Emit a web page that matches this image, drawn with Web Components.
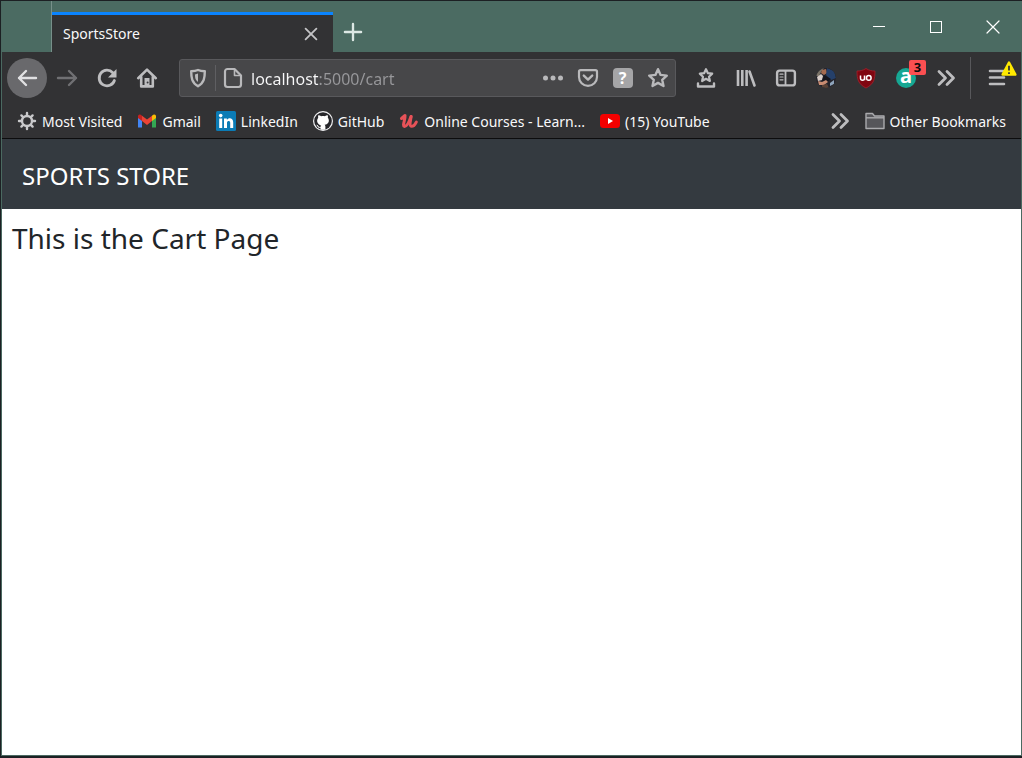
<!DOCTYPE html>
<html lang="en">
<head>
<meta charset="utf-8">
<meta name="viewport" content="width=device-width, initial-scale=1">
<title>SportsStore</title>
<style>
  html, body { margin: 0; height: 100%; }
  body { background: #1c2023; font-family: "Noto Sans", "Open Sans", sans-serif; }
</style>
</head>
<body>
<browser-window>
  <title-bar slot="chrome">SportsStore</title-bar>
  <nav-toolbar slot="chrome"></nav-toolbar>
  <bookmarks-bar slot="chrome"></bookmarks-bar>
  <store-page></store-page>
</browser-window>

<script>
const reset = `
  *, *::before { box-sizing: border-box; }
  button { display: flex; align-items: center; justify-content: center; margin: 0; padding: 0;
    border: 0; background: none; color: inherit; font: inherit; }
  svg { display: block; flex: none; overflow: visible; }
  a { color: inherit; text-decoration: none; }
`;

const line = (d, w = 2, extra = '') =>
  `<path d="${d}" fill="none" stroke="currentColor" stroke-width="${w}" stroke-linecap="round" stroke-linejoin="round" ${extra}/>`;

const icons = {
  back: line('M19 10H2M9 3L2 10l7 7', 2.4),
  forward: line('M1 10h18M12 3l7 7-7 7', 2.4),
  reload: line('M17.400 12.500A7.800 7.800 0 1 1 15.800 4.800', 2.8) + '<path d="M19.500 1v8.500H11z" fill="currentColor"/>',
  home: line('M1.2 10.2L10 1.6l8.8 8.6', 2.6) + line('M4.200 9v9.400h11.600V9', 2.6) +
    '<path d="M7.5 10h5v8h-5z" fill="currentColor"/><circle cx="10.6" cy="14.6" r="1" fill="#38383b"/>',
  shield: line('M10 2c2.200.9 4.500 1.200 6.800 1.300 0 6.500-.6 11.400-6.800 14.900C3.800 14.700 3.200 9.800 3.200 3.300 5.500 3.200 7.800 2.900 10 2z', 2.400) +
    '<path d="M10 5.500v8.500c-2.500-2-3-4-3-7.600z" fill="currentColor"/>',
  page: line('M4.500 1h7L18 7.500v9a2.500 2.500 0 0 1-2.500 2.500h-11A2.500 2.500 0 0 1 2 16.500v-13A2.500 2.500 0 0 1 4.500 1z', 2.200) +
    line('M11.500 1.500V7.500H17.500', 1.6),
  dots: '<g fill="currentColor"><circle cx="2.500" cy="10" r="2.500"/><circle cx="10" cy="10" r="2.500"/><circle cx="17.500" cy="10" r="2.500"/></g>',
  pocket: line('M2.500 2.200h15a1.500 1.500 0 0 1 1.500 1.500V9a9 8.800 0 0 1-18 0V3.700A1.500 1.500 0 0 1 2.500 2.200z', 2.2) + line('M5.800 7.600l4.200 4 4.200-4', 2.4),
  star: line('M10 1.200l2.600 5.700 6.200.7-4.600 4.200 1.300 6.200L10 14.900 4.500 18l1.300-6.200L1.200 7.600l6.200-.7z', 2.400),
  starTray: line('M10 1.200l1.900 4 4.300.500-3.200 3 .9 4.300-3.900-2.200L6.100 13 7 8.700l-3.200-3 4.300-.5z', 2.200) +
    line('M2 15.500v3h16v-3', 2.4),
  library: line('M2 2v16M6.300 2v16M10.600 2v16', 2.6, 'style="stroke-linecap:butt"') + line('M13.500 3.500L18.500 17.500', 2.6),
  sidebar: '<rect x="1.100" y="2.600" width="17.800" height="14.800" rx="2.500" fill="none" stroke="currentColor" stroke-width="2.400"/>' +
    line('M9.500 3v14', 1.8) + line('M4 6.200h3M4 9h3M4 11.800h3', 1.200),
  more: line('M3 3.500l6.500 6.500L3 16.500M11 3.500l6.500 6.500L11 16.500', 2.8),
  menu: line('M2 3h14M2 9.500h14M2 16h14', 2.6),
  photo: '<clipPath id="p"><circle cx="10" cy="10" r="10"/></clipPath><g clip-path="url(#p)"><path fill="#24242c" d="M0 0h20v20H0z"/>' +
    '<path fill="#7b7468" d="M0 0h8L5 4 3 8H0z"/><path fill="#d8cdc8" d="M1 9l4-3 2 2-1 4-4 1z"/><path fill="#a56b50" d="M6 2l4-1 1 4-3 2-3-2z"/>' +
    '<path fill="#25406a" d="M11 0l7 3 2 7-5 2-5-5z"/><path fill="#16161e" d="M8 7l7 4-5 4-4-2z"/>' +
    '<path fill="#c98c72" d="M2 13l4 1 4-2 2 2-4 3-5 0z"/><path fill="#8fa4bb" d="M14 15l4-3v4l-4 2z"/><path fill="#5a4236" d="M6 17l5-1 2 4H6z"/></g>',
  amazon: '<circle cx="10" cy="10" r="10" fill="#16a793"/>',
  ublock: '<path d="M10 .5c3 2 6 2.500 9 2.500 0 8-1 13-9 17C2 16 1 11 1 3c3 0 6-.5 9-2.500z" fill="#800610" stroke="#a3212c" stroke-width=".8"/>' +
    '<path d="M4.500 7.500v2.800q0 2 2 2t2-2V7.500M8.600 7.500v4.800" fill="none" stroke="#fff" stroke-width="1.500"/><circle cx="12.800" cy="9.900" r="2.300" fill="none" stroke="#fff" stroke-width="1.500"/>',
  warning: '<path d="M10 2l8 15H2z" fill="#ffe900" stroke="#ffe900" stroke-width="3" stroke-linejoin="round"/><path d="M10 6v6M10 14v2.400" stroke="#333" stroke-width="2.200"/>',
  gear: '<circle cx="10" cy="10" r="5" fill="none" stroke="currentColor" stroke-width="2.400"/>' +
    line('M10 2v2.500M10 15.500V18M2 10h2.500M15.500 10H18M4.400 4.400l1.700 1.700M13.900 13.900l1.700 1.700M15.600 4.400l-1.700 1.700M6.100 13.900l-1.700 1.700', 2.400),
  gmail: '<path fill="#4285f4" d="M1 5v11.500h4V8.300z"/><path fill="#34a853" d="M15 8.300v8.200h4V5z"/><path fill="#fbbc04" d="M15 4.800V10l4-3V4.800q-1.500-2.600-4 0z"/>' +
    '<path fill="#ea4335" d="M5 4.800L10 8.600l5-3.800V10l-5 3.900L5 10z"/><path fill="#c5221f" d="M1 4.800q1.500-2.600 4 0V10L1 7z"/>',
  linkedin: '<rect width="20" height="20" rx="1.500" fill="#0b7bb5"/><g fill="#fff"><circle cx="4.700" cy="4.600" r="1.800"/><path d="M3.200 7.600h3V17h-3zM8 7.600h2.900v1.300c1.500-2.500 6.300-2.200 6.300 2.300V17h-3v-5.200c0-2.400-3.200-2.300-3.200 0V17H8z"/></g>',
  github: '<circle cx="10" cy="10" r="10" fill="#f2f2f4"/><circle cx="10" cy="10" r="8.800" fill="#26262a"/>' +
    '<path fill="#fff" d="M5.300 4.200c1-.2 2 .4 2.800 1 1.200-.3 2.600-.3 3.800 0 .8-.6 1.800-1.200 2.800-1 .4 1 .3 1.900.1 2.500 2.300 2.900.8 6.600-3.200 7 .7.600.8 1.300.8 2.100v2.600c-1.600.5-3.400.5-4.900 0v-1.700c-2.100.4-2.700-.6-3.100-1.500-.3-.6-.6-.9-1.100-1.200.6-.4 1.500.1 2 .9.600.9 1.200 1.200 2.300.9.100-.5.300-.9.600-1.100C4.300 13.100 3 9.700 5.200 6.700c-.2-.8-.2-1.600.1-2.500z"/>',
  udemy: '<g fill="none" stroke="#e65258" stroke-linecap="round" stroke-linejoin="round"><path d="M2.500 7.500L6 4.500C6.500 8.500 2.800 15 5.500 15.400c3 .2 5-5.500 6.500-9.900" stroke-width="3"/><path d="M12.200 5.500C11.800 9.500 9.800 15.300 12.600 15.400c2 0 3.800-2.400 4.800-4.400" stroke-width="2.800"/></g>',
  youtube: '<rect y="3" width="20" height="14" rx="3.500" fill="#f40000"/><path d="M8 7l5 3-5 3z" fill="#fff"/>',
  folder: '<path d="M1 17.500V2.500h6.500l2 2.500H19v12.500z" fill="#56565a" stroke="#aaaaad" stroke-width="1.400" stroke-linejoin="round"/><path d="M1 6.800h18" stroke="#aaaaad" stroke-width="1.400"/>',
  plus: line('M10 1v18M1 10h18', 2.6),
  cross: line('M4 4l12 12M16 4L4 16', 2),
  winMin: '<path d="M4 9.500h12" stroke="currentColor"/>',
  winMax: '<rect x="4.500" y="4.500" width="11" height="11" fill="none" stroke="currentColor"/>',
  winClose: line('M4 4l12 12M16 4L4 16', 1.2)
};
const icon = (name, size = 20) =>
  `<svg width="${size}" height="${size}" viewBox="0 0 20 20" aria-hidden="true">${icons[name]}</svg>`;

function define(name, css, html) {
  const template = document.createElement('template');
  template.innerHTML = `<style>${reset}${css}</style>${html}`;
  customElements.define(name, class extends HTMLElement {
    constructor() {
      super();
      this.attachShadow({ mode: 'open' }).append(template.content.cloneNode(true));
    }
  });
}

define('browser-window', `
  :host { display: flex; flex-direction: column; box-sizing: border-box; min-height: 100vh;
    border: solid #1c2023; border-width: 1px 0 2px 1px; }
  .frame { flex: 1; display: flex; flex-direction: column; background: #fff;
    border: solid #4b6961; border-width: 0 1px 1px; }
  header { border-bottom: 1px solid #0c0c0d; background: #323234; }
  main { flex: 1; }
`, `<div class="frame"><header><slot name="chrome"></slot></header><main><slot></slot></main></div>`);

define('title-bar', `
  :host { display: flex; height: 51px; background: #4b6b62; color: #f9f9fa; font-size: 14px; }
  .lead { width: 50px; border-right: 1px solid #77908a; }
  .tab { display: flex; align-items: center; justify-content: space-between; width: 281px;
    margin-top: 11px; padding: 0 13px 0 11px; border-top: 3px solid #0a84ff; background: #323234; }
  .tab button { color: #c4c4c6; }
  .new { width: 40px; padding-top: 11px; color: #dce8e4; }
  .controls { display: flex; margin-left: auto; }
  .controls button { width: 57px; color: #fff; }
`, `
  <div class="lead"></div>
  <div class="tab"><span><slot></slot></span><button aria-label="Close tab">${icon('cross', 18)}</button></div>
  <button class="new" aria-label="New tab">${icon('plus', 18)}</button>
  <div class="controls">
    <button aria-label="Minimize">${icon('winMin')}</button>
    <button aria-label="Maximize">${icon('winMax')}</button>
    <button aria-label="Close">${icon('winClose')}</button>
  </div>`);

define('address-bar', `
  :host { display: flex; align-items: center; box-sizing: border-box; height: 38px; min-width: 0;
    border: 1px solid #59595c; border-radius: 3px; background: #474749; color: #b9b9bb; }
  button { width: 35px; height: 36px; }
  .page { border-left: 1px solid #5f5f62; height: 26px; }
  input { flex: 1; min-width: 0; height: 36px; margin: 0; padding: 2px 0 0 1px; border: 0; outline: 0;
    font: 16px "Noto Sans", "Open Sans", sans-serif; color: #f9f9fa;
    background: linear-gradient(90deg, #f9f9fa 69px, #98989b 69px);
    -webkit-background-clip: text; background-clip: text; -webkit-text-fill-color: transparent; }
  .help { width: 20px; height: 20px; border-radius: 4px; background: #a5a5a7; color: #fff;
    font: bold 16px/20px "Noto Sans", sans-serif; text-align: center; }
`, `
  <button aria-label="Tracking protection">${icon('shield')}</button>
  <button class="page" aria-label="Site information">${icon('page')}</button>
  <input type="text" aria-label="Address" value="localhost:5000/cart" spellcheck="false">
  <button aria-label="Page actions">${icon('dots')}</button>
  <button aria-label="Save to Pocket">${icon('pocket')}</button>
  <button aria-label="Help"><span class="help">?</span></button>
  <button aria-label="Bookmark this page">${icon('star')}</button>`);

define('nav-toolbar', `
  :host { display: flex; align-items: center; height: 52px; padding: 0 3px 0 5px; color: #bdbdbf; }
  button { position: relative; flex: none; width: 40px; height: 40px; }
  .back { border-radius: 50%; background: #69696c; color: #e0e0e2; }
  .forward { color: #707073; }
  address-bar { flex: 1; margin: 0 10px 0 12px; }
  .rule { width: 1px; height: 42px; margin: 0 7px 0 4px; background: #58585b; }
  .a { position: absolute; inset: 0; color: #fff; font: bold 20px/36px "Noto Sans", sans-serif; text-align: center; }
  .badge { position: absolute; top: 2px; left: 23px; width: 17px; height: 15px; border-radius: 2px;
    background: #fb4f51; color: #0c0c0d; font: bold 13px/15px "Noto Sans", sans-serif; text-align: center; }
  .alert { position: absolute; top: 3px; right: 1px; }
`, `
  <button class="back" aria-label="Back">${icon('back')}</button>
  <button class="forward" aria-label="Forward">${icon('forward')}</button>
  <button aria-label="Reload">${icon('reload')}</button>
  <button aria-label="Home">${icon('home')}</button>
  <address-bar></address-bar>
  <button aria-label="Bookmarks menu">${icon('starTray')}</button>
  <button aria-label="Library">${icon('library')}</button>
  <button aria-label="Sidebars">${icon('sidebar')}</button>
  <button aria-label="Account">${icon('photo')}</button>
  <button aria-label="Content blocker">${icon('ublock')}</button>
  <button aria-label="Shopping assistant">${icon('amazon')}<span class="a">a</span><span class="badge">3</span></button>
  <button aria-label="More tools">${icon('more')}</button>
  <div class="rule"></div>
  <button aria-label="Open menu">${icon('menu')}<span class="alert">${icon('warning', 16)}</span></button>`);

define('bookmark-link', `
  :host { display: block; flex: none; }
  a { display: flex; align-items: center; gap: 5px; white-space: nowrap; }
`, `<a href="#"><slot name="icon"></slot><span><slot></slot></span></a>`);

const bookmark = (name, label) =>
  `<bookmark-link><span slot="icon">${icon(name)}</span>${label}</bookmark-link>`;
define('bookmarks-bar', `
  :host { display: flex; align-items: center; gap: 15px; height: 34px; padding: 0 15px; color: #f9f9fa;
    font-size: 14px; }
  [slot] { color: #c9c9cb; }
  .more { margin-left: auto; color: #bdbdbf; }
`, bookmark('gear', 'Most Visited') + bookmark('gmail', 'Gmail') + bookmark('linkedin', 'LinkedIn') +
   bookmark('github', 'GitHub') + bookmark('udemy', 'Online Courses - Learn...') + bookmark('youtube', '(15) YouTube') +
   `<button class="more" aria-label="More bookmarks">${icon('more')}</button>` + bookmark('folder', 'Other Bookmarks'));

define('store-page', `
  :host { display: block; color: #212529; }
  nav { padding: 18px 20px 14px; background: #343a40; color: #fff; font-size: 24px; line-height: 38px; }
  h1 { margin: 0; padding: 11px 10px; font-size: 28px; font-weight: 400; line-height: 36px; }
`, `<nav><a href="#">SPORTS STORE</a></nav><h1>This is the Cart Page</h1>`);
</script>
</body>
</html>
